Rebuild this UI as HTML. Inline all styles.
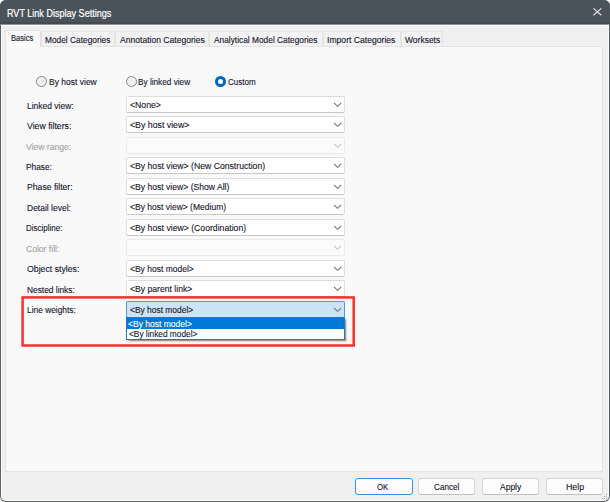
<!DOCTYPE html>
<html><head><meta charset="utf-8"><style>
html,body{margin:0;padding:0;width:610px;height:502px;overflow:hidden;background:#ffffff;}
body{position:relative;font-family:"Liberation Sans",sans-serif;}
.win{position:absolute;left:0;top:0;width:610px;height:502px;border-radius:6px;background:#5a6269;overflow:hidden;}
.tb{position:absolute;left:0;top:0;width:610px;height:25px;background:#4b535a;border-bottom:1px solid #8d9297;box-shadow:inset 0 -2px 0 #434a50;box-sizing:border-box;}
.client{position:absolute;left:1px;top:25px;width:608px;height:476px;background:#f0f0f0;border-top:1px solid #ffffff;border-left:1px solid #ffffff;border-right:1px solid #f7f7f7;border-bottom:1px solid #ffffff;box-sizing:border-box;border-radius:0 0 5px 5px;}
.t{position:absolute;white-space:pre;z-index:5;-webkit-text-stroke:0.12px currentColor;line-height:10px;transform-origin:0 0;}
.panel{position:absolute;left:5px;top:46px;width:598px;height:426px;background:#f9f9f9;border:1px solid #e3e3e3;box-sizing:border-box;}
.tab{position:absolute;top:31px;height:15px;background:#f2f2f2;border:1px solid #e4e4e4;border-bottom:none;box-sizing:border-box;}
.tab.sel{top:30.4px;height:16.6px;background:#f9f9f9;border-color:#e3e3e3;z-index:2;}
.radio{position:absolute;width:11px;height:11px;border-radius:50%;box-sizing:border-box;border:1.2px solid #858585;background:#f0f0f0;}
.radio.sel{border:3.3px solid #0067c0;background:#ffffff;}
.cb{position:absolute;left:126px;width:219px;height:17px;background:#ffffff;border:1px solid #dedede;border-bottom-color:#c6c6c6;border-radius:2px;box-sizing:border-box;}
.cb.dis{background:#fbfbfb;border-color:#ebebeb;}
.cb.foc{background:#cce4f7;border-color:#4d9ae0;border-bottom-color:#0067c0;}
.chev{position:absolute;left:206px;top:4px;}
.dd{position:absolute;left:126px;top:317px;width:219px;height:23px;background:#ffffff;border:1px solid #1f78d0;box-sizing:border-box;box-shadow:1.5px 1.5px 1.5px rgba(50,40,30,0.45);}
.hl{position:absolute;left:0;top:0;right:0;height:11px;background:#0078d7;}
.red{position:absolute;left:21.2px;top:296.5px;width:334px;height:50px;border:2.5px solid #fa2a2a;box-sizing:border-box;}
.btn{position:absolute;top:478px;width:57px;height:17px;background:#fdfdfd;border:1px solid #d4d4d4;border-bottom-color:#c0c0c0;border-radius:3px;box-sizing:border-box;}
.btn.def{border:1.6px solid #3a8ddb;width:58px;}
.grip{position:absolute;width:1px;height:1px;background:#b0b0b0;}
</style></head><body>
<div class="win">
<div class="tb"></div>
<div class="client"></div>
<div class="panel"></div>
<div class="t" style="left:7.48px;top:7.79px;color:#ffffff;font-size:10.7px;transform:scaleX(0.8470);-webkit-text-stroke:0.2px #ffffff;">RVT Link Display Settings</div>
<svg style="position:absolute;left:592px;top:7px" width="11" height="10" viewBox="0 0 11 10"><path d="M1.5 1.4 L9.3 8.3 M9.3 1.4 L1.5 8.3" stroke="#e4e4e4" stroke-width="1.15" fill="none"/></svg>
<div class="tab sel" style="left:5px;width:36px;"></div>
<div class="t" style="left:11.44px;top:32.51px;color:#15152a;font-size:9.2px;transform:scaleX(0.8281);">Basics</div>
<div class="tab" style="left:41px;width:73.5px;"></div>
<div class="t" style="left:44.60px;top:35.01px;color:#15152a;font-size:9.2px;transform:scaleX(0.9073);">Model Categories</div>
<div class="tab" style="left:114.5px;width:94.5px;"></div>
<div class="t" style="left:119.60px;top:35.01px;color:#15152a;font-size:9.2px;transform:scaleX(0.9328);">Annotation Categories</div>
<div class="tab" style="left:209px;width:114px;"></div>
<div class="t" style="left:213.60px;top:35.01px;color:#15152a;font-size:9.2px;transform:scaleX(0.9082);">Analytical Model Categories</div>
<div class="tab" style="left:323px;width:77.5px;"></div>
<div class="t" style="left:326.97px;top:35.01px;color:#15152a;font-size:9.2px;transform:scaleX(0.9369);">Import Categories</div>
<div class="tab" style="left:400.5px;width:42.5px;"></div>
<div class="t" style="left:405.00px;top:35.01px;color:#15152a;font-size:9.2px;transform:scaleX(0.9240);">Worksets</div>
<div class="radio" style="left:35.85px;top:76.1px;"></div>
<div class="t" style="left:48.60px;top:77.01px;color:#15152a;font-size:9.2px;transform:scaleX(0.9260);">By host view</div>
<div class="radio" style="left:125.70px;top:76.1px;"></div>
<div class="t" style="left:137.60px;top:77.01px;color:#15152a;font-size:9.2px;transform:scaleX(0.8950);">By linked view</div>
<div class="radio sel" style="left:215.20px;top:76.1px;"></div>
<div class="t" style="left:228.39px;top:77.01px;color:#15152a;font-size:9.2px;transform:scaleX(0.8732);">Custom</div>
<div class="t" style="left:26.51px;top:100.61px;color:#15152a;font-size:9.2px;transform:scaleX(0.9222);">Linked view:</div>
<div class="cb" style="top:96.00px;"><svg class="chev" width="9" height="6" viewBox="0 0 9 6"><path d="M1.1 2.0 L4.6 5.3 L8.1 2.0" stroke="#777777" stroke-width="1.05" fill="none"/></svg></div>
<div class="t" style="left:129.99px;top:99.91px;color:#15152a;font-size:9.2px;transform:scaleX(0.9456);">&lt;None&gt;</div>
<div class="t" style="left:26.50px;top:121.06px;color:#15152a;font-size:9.2px;transform:scaleX(0.9478);">View filters:</div>
<div class="cb" style="top:116.00px;"><svg class="chev" width="9" height="6" viewBox="0 0 9 6"><path d="M1.1 2.0 L4.6 5.3 L8.1 2.0" stroke="#777777" stroke-width="1.05" fill="none"/></svg></div>
<div class="t" style="left:129.98px;top:120.36px;color:#15152a;font-size:9.2px;transform:scaleX(0.9533);">&lt;By host view&gt;</div>
<div class="t" style="left:25.89px;top:141.51px;color:#a3a3a3;font-size:9.2px;transform:scaleX(0.9357);">View range:</div>
<div class="cb dis" style="top:137.00px;"><svg class="chev" width="9" height="6" viewBox="0 0 9 6"><path d="M1.1 2.0 L4.6 5.3 L8.1 2.0" stroke="#c8c8c8" stroke-width="1.05" fill="none"/></svg></div>
<div class="t" style="left:26.48px;top:161.96px;color:#15152a;font-size:9.2px;transform:scaleX(0.9067);">Phase:</div>
<div class="cb" style="top:157.00px;"><svg class="chev" width="9" height="6" viewBox="0 0 9 6"><path d="M1.1 2.0 L4.6 5.3 L8.1 2.0" stroke="#777777" stroke-width="1.05" fill="none"/></svg></div>
<div class="t" style="left:129.99px;top:161.26px;color:#15152a;font-size:9.2px;transform:scaleX(0.9415);">&lt;By host view&gt; (New Construction)</div>
<div class="t" style="left:26.51px;top:182.41px;color:#15152a;font-size:9.2px;transform:scaleX(0.9410);">Phase filter:</div>
<div class="cb" style="top:178.00px;"><svg class="chev" width="9" height="6" viewBox="0 0 9 6"><path d="M1.1 2.0 L4.6 5.3 L8.1 2.0" stroke="#777777" stroke-width="1.05" fill="none"/></svg></div>
<div class="t" style="left:130.00px;top:181.71px;color:#15152a;font-size:9.2px;transform:scaleX(0.9353);">&lt;By host view&gt; (Show All)</div>
<div class="t" style="left:26.51px;top:202.86px;color:#15152a;font-size:9.2px;transform:scaleX(0.9242);">Detail level:</div>
<div class="cb" style="top:198.00px;"><svg class="chev" width="9" height="6" viewBox="0 0 9 6"><path d="M1.1 2.0 L4.6 5.3 L8.1 2.0" stroke="#777777" stroke-width="1.05" fill="none"/></svg></div>
<div class="t" style="left:130.00px;top:202.16px;color:#15152a;font-size:9.2px;transform:scaleX(0.9269);">&lt;By host view&gt; (Medium)</div>
<div class="t" style="left:26.49px;top:223.31px;color:#15152a;font-size:9.2px;transform:scaleX(0.8708);">Discipline:</div>
<div class="cb" style="top:219.00px;"><svg class="chev" width="9" height="6" viewBox="0 0 9 6"><path d="M1.1 2.0 L4.6 5.3 L8.1 2.0" stroke="#777777" stroke-width="1.05" fill="none"/></svg></div>
<div class="t" style="left:130.00px;top:222.61px;color:#15152a;font-size:9.2px;transform:scaleX(0.9435);">&lt;By host view&gt; (Coordination)</div>
<div class="t" style="left:26.08px;top:243.76px;color:#a3a3a3;font-size:9.2px;transform:scaleX(0.9325);">Color fill:</div>
<div class="cb dis" style="top:239.00px;"><svg class="chev" width="9" height="6" viewBox="0 0 9 6"><path d="M1.1 2.0 L4.6 5.3 L8.1 2.0" stroke="#c8c8c8" stroke-width="1.05" fill="none"/></svg></div>
<div class="t" style="left:26.51px;top:264.21px;color:#15152a;font-size:9.2px;transform:scaleX(0.9499);">Object styles:</div>
<div class="cb" style="top:260.00px;"><svg class="chev" width="9" height="6" viewBox="0 0 9 6"><path d="M1.1 2.0 L4.6 5.3 L8.1 2.0" stroke="#777777" stroke-width="1.05" fill="none"/></svg></div>
<div class="t" style="left:129.99px;top:263.51px;color:#15152a;font-size:9.2px;transform:scaleX(0.9242);">&lt;By host model&gt;</div>
<div class="t" style="left:26.50px;top:284.66px;color:#15152a;font-size:9.2px;transform:scaleX(0.9087);">Nested links:</div>
<div class="cb" style="top:280.00px;"><svg class="chev" width="9" height="6" viewBox="0 0 9 6"><path d="M1.1 2.0 L4.6 5.3 L8.1 2.0" stroke="#777777" stroke-width="1.05" fill="none"/></svg></div>
<div class="t" style="left:129.99px;top:283.96px;color:#15152a;font-size:9.2px;transform:scaleX(0.9378);">&lt;By parent link&gt;</div>
<div class="t" style="left:26.50px;top:305.11px;color:#15152a;font-size:9.2px;transform:scaleX(0.9109);">Line weights:</div>
<div class="cb foc" style="top:301.00px;"><svg class="chev" width="9" height="6" viewBox="0 0 9 6"><path d="M1.1 2.0 L4.6 5.3 L8.1 2.0" stroke="#777777" stroke-width="1.05" fill="none"/></svg></div>
<div class="t" style="left:130.00px;top:305.31px;color:#15152a;font-size:9.2px;transform:scaleX(0.9168);">&lt;By host model&gt;</div>
<div class="dd"><div class="hl"></div></div>
<div class="t" style="left:128.47px;top:318.71px;color:#ffffff;font-size:9.2px;transform:scaleX(0.9278);">&lt;By host model&gt;</div>
<div class="t" style="left:128.51px;top:329.21px;color:#15152a;font-size:9.2px;transform:scaleX(0.9043);">&lt;By linked model&gt;</div>
<svg style="position:absolute;left:0;top:0;z-index:6" width="610" height="502"><rect x="22.6" y="297.4" width="331.1" height="48.1" fill="none" stroke="#fa3030" stroke-width="2.5"/></svg>
<div class="btn def" style="left:355px;"></div>
<div class="t" style="left:377.26px;top:482.11px;color:#15152a;font-size:9.2px;transform:scaleX(0.8498);">OK</div>
<div class="btn" style="left:418px;"></div>
<div class="t" style="left:433.50px;top:482.11px;color:#15152a;font-size:9.2px;transform:scaleX(0.8891);">Cancel</div>
<div class="btn" style="left:482px;"></div>
<div class="t" style="left:500.00px;top:482.11px;color:#15152a;font-size:9.2px;transform:scaleX(0.9249);">Apply</div>
<div class="btn" style="left:546px;"></div>
<div class="t" style="left:565.73px;top:482.11px;color:#15152a;font-size:9.2px;transform:scaleX(0.9582);">Help</div>
<div class="grip" style="left:606px;top:494px;"></div>
<div class="grip" style="left:604px;top:496px;"></div>
<div class="grip" style="left:606px;top:496px;"></div>
<div class="grip" style="left:602px;top:498px;"></div>
<div class="grip" style="left:604px;top:498px;"></div>
<div class="grip" style="left:606px;top:498px;"></div>

</div>
</body></html>
